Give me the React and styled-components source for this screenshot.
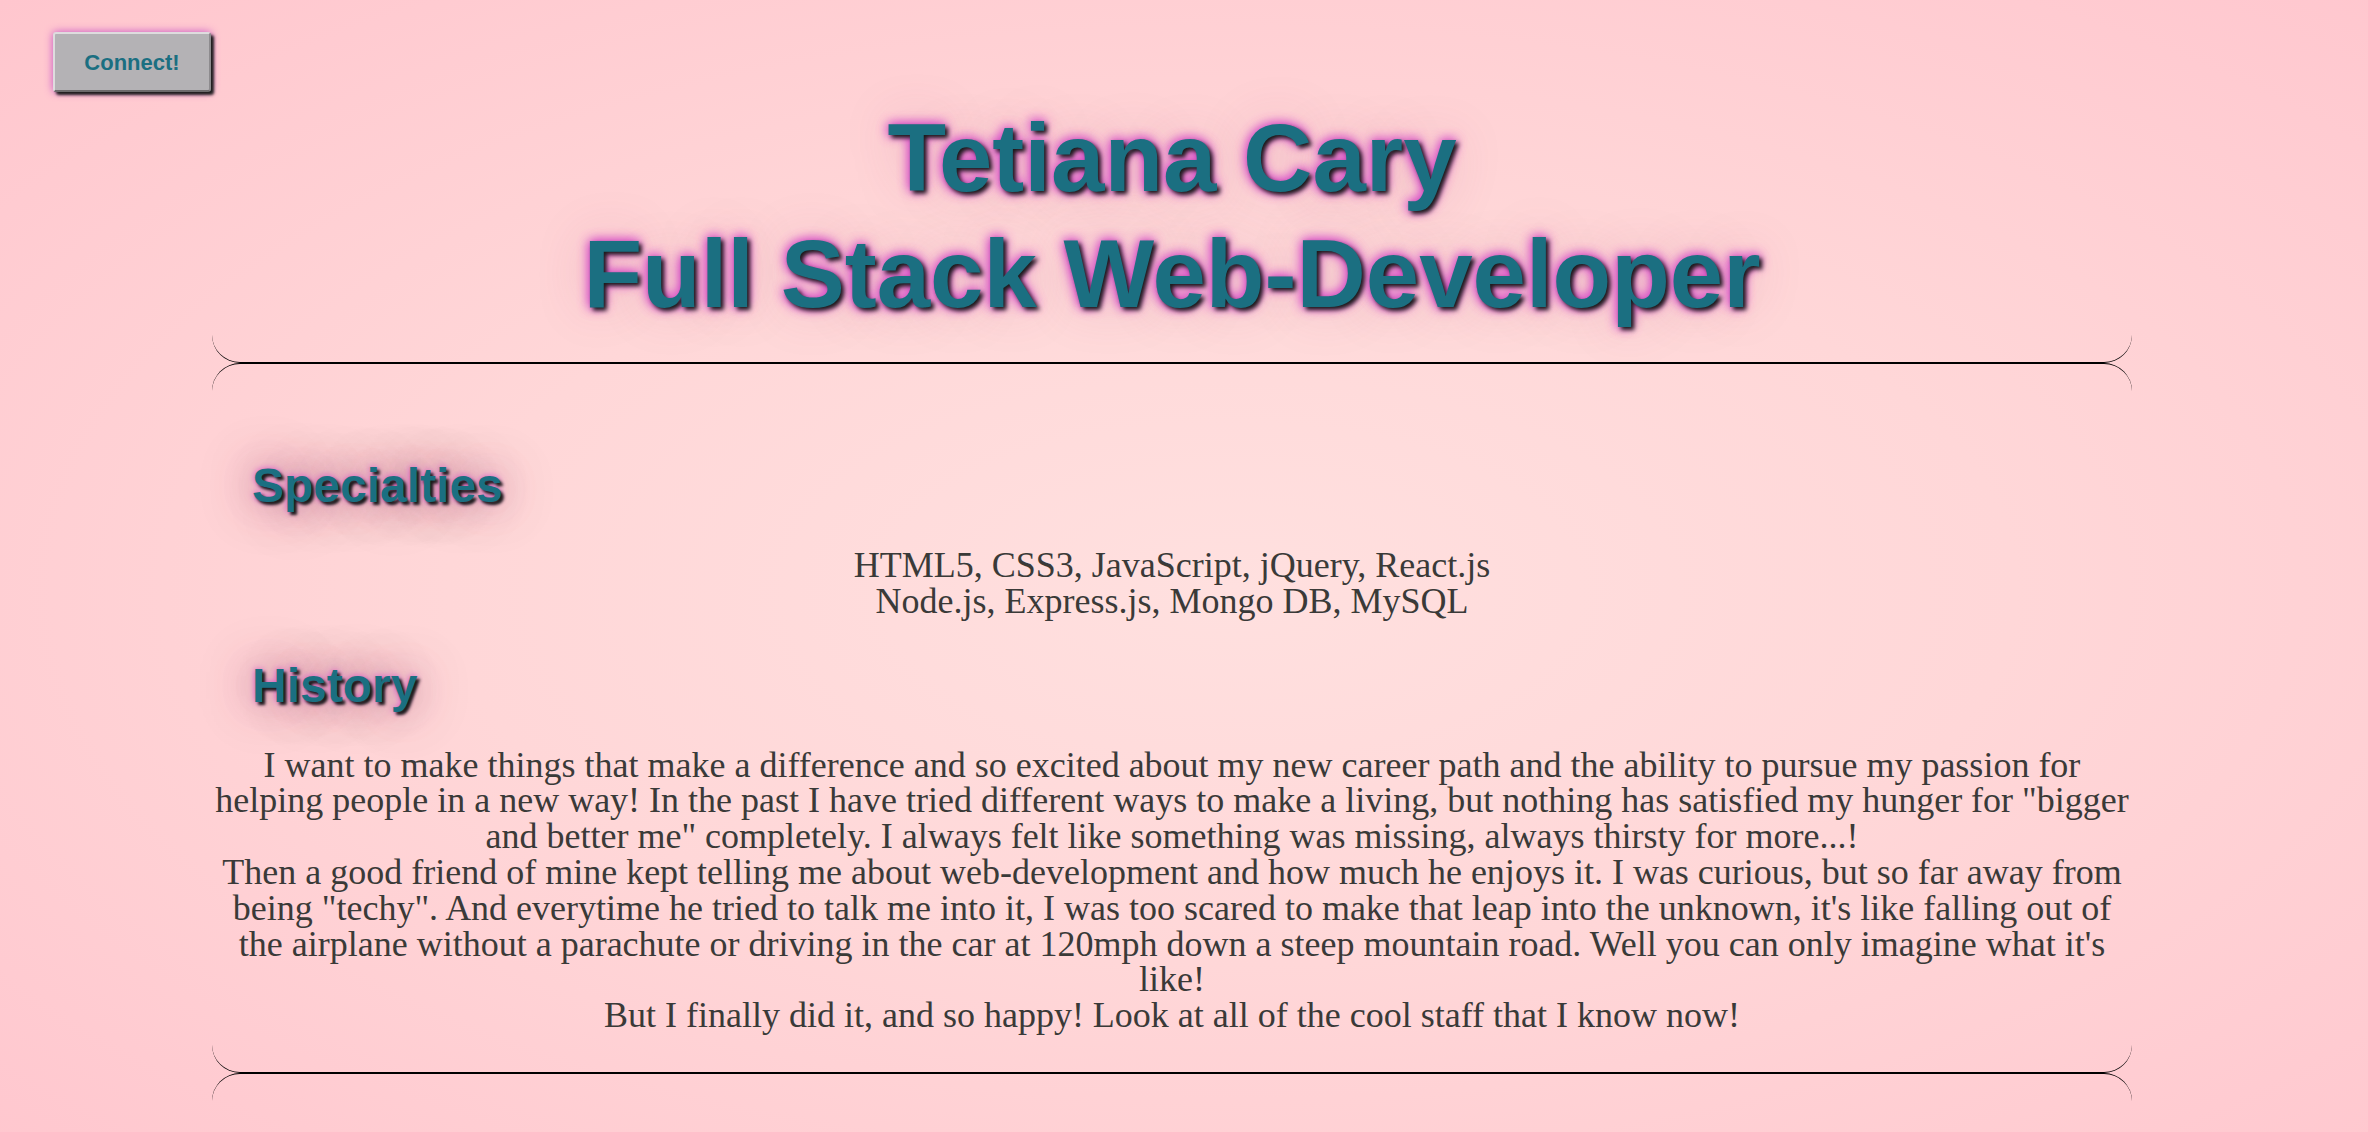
import React from 'react';
import styled, { createGlobalStyle } from 'styled-components';

const GlobalStyle = createGlobalStyle`
  html {
    min-height: 100%;
    background: radial-gradient(ellipse at 52% 52%, #ffe0df 0%, #ffd7d8 45%, #ffc6ce 100%);
  }

  body {
    margin: 0;
    min-height: 100vh;
    font-family: 'Liberation Serif', 'Times New Roman', serif;
    color: #3a3a38;
  }
`;

const TEAL = '#1b6f81';

const Nav = styled.nav`
  padding: 32px 0 0 53px;
  height: 60px;
`;

const ConnectBtn = styled.button`
  width: 158px;
  height: 60px;
  padding-top: 3px;
  background: #b4b2b5;
  border: 2px solid;
  border-color: #dedcde #8d8b8e #6c6a6c #dedcde;
  border-radius: 3px;
  box-shadow: 3px 3px 3px #1d1d1d, 0 0 8px #c650c4;
  color: ${TEAL};
  font-family: 'Liberation Sans', Arial, sans-serif;
  font-weight: bold;
  font-size: 22px;
  cursor: pointer;
`;

const Header = styled.header`
  margin: 8px 0 0 212px;
  width: 1920px;
  padding-bottom: 30px;
  border-bottom: 1px solid #000;
  border-radius: 0 0 28px 28px;
  text-align: center;
`;

const Title = styled.h1`
  margin: 0;
  font-family: 'Liberation Sans', Arial, sans-serif;
  font-weight: bold;
  font-size: 96px;
  line-height: 116px;
  color: ${TEAL};
  text-shadow: 3px 3px 4px #1a1a1a, 0 0 12px #d84fc8, 0 0 12px #d84fc8,
    0 0 50px rgba(150, 60, 110, 0.25);
`;

const Section = styled.section`
  margin-left: 212px;
  width: 1920px;
  padding: 94px 0 38px;
  border-top: 1px solid #000;
  border-bottom: 1px solid #000;
  border-radius: 28px;
`;

const SectionTitle = styled.h2`
  margin: 0 0 35px;
  padding-left: 40px;
  font-family: 'Liberation Sans', Arial, sans-serif;
  font-weight: bold;
  font-size: 48px;
  line-height: normal;
  color: ${TEAL};
  text-shadow: 3px 3px 3px #1a1a1a, 0 0 6px #d84fc8, 0 0 40px rgba(130, 40, 90, 0.6),
    0 0 60px rgba(130, 40, 90, 0.35);
`;

const Text = styled.p`
  margin: 0 0 38px;
  font-size: 36px;
  line-height: 35.8px;
  text-align: center;

  &:last-child {
    margin-bottom: 0;
  }
`;

const Footer = styled.footer`
  margin-left: 212px;
  width: 1920px;
  height: 60px;
  border-top: 1px solid #000;
  border-radius: 28px 28px 0 0;
`;

export default function App() {
  return (
    <>
      <GlobalStyle />
      <Nav>
        <ConnectBtn>Connect!</ConnectBtn>
      </Nav>
      <Header>
        <Title>
          Tetiana Cary
          <br />
          Full Stack Web-Developer
        </Title>
      </Header>
      <Section>
        <SectionTitle>Specialties</SectionTitle>
        <Text>
          HTML5, CSS3, JavaScript, jQuery, React.js
          <br />
          Node.js, Express.js, Mongo DB, MySQL
        </Text>
        <SectionTitle>History</SectionTitle>
        <Text>
          I want to make things that make a difference and so excited about my
          new career path and the ability to pursue my passion for helping
          people in a new way! In the past I have tried different ways to make
          a living, but nothing has satisfied my hunger for "bigger and better
          me" completely. I always felt like something was missing, always
          thirsty for more...!
          <br />
          Then a good friend of mine kept telling me about web-development and
          how much he enjoys it. I was curious, but so far away from being
          "techy". And everytime he tried to talk me into it, I was too scared
          to make that leap into the unknown, it's like falling out of the
          airplane without a parachute or driving in the car at 120mph down a
          steep mountain road. Well you can only imagine what it's like!
          <br />
          But I finally did it, and so happy! Look at all of the cool staff
          that I know now!
        </Text>
      </Section>
      <Footer />
    </>
  );
}
